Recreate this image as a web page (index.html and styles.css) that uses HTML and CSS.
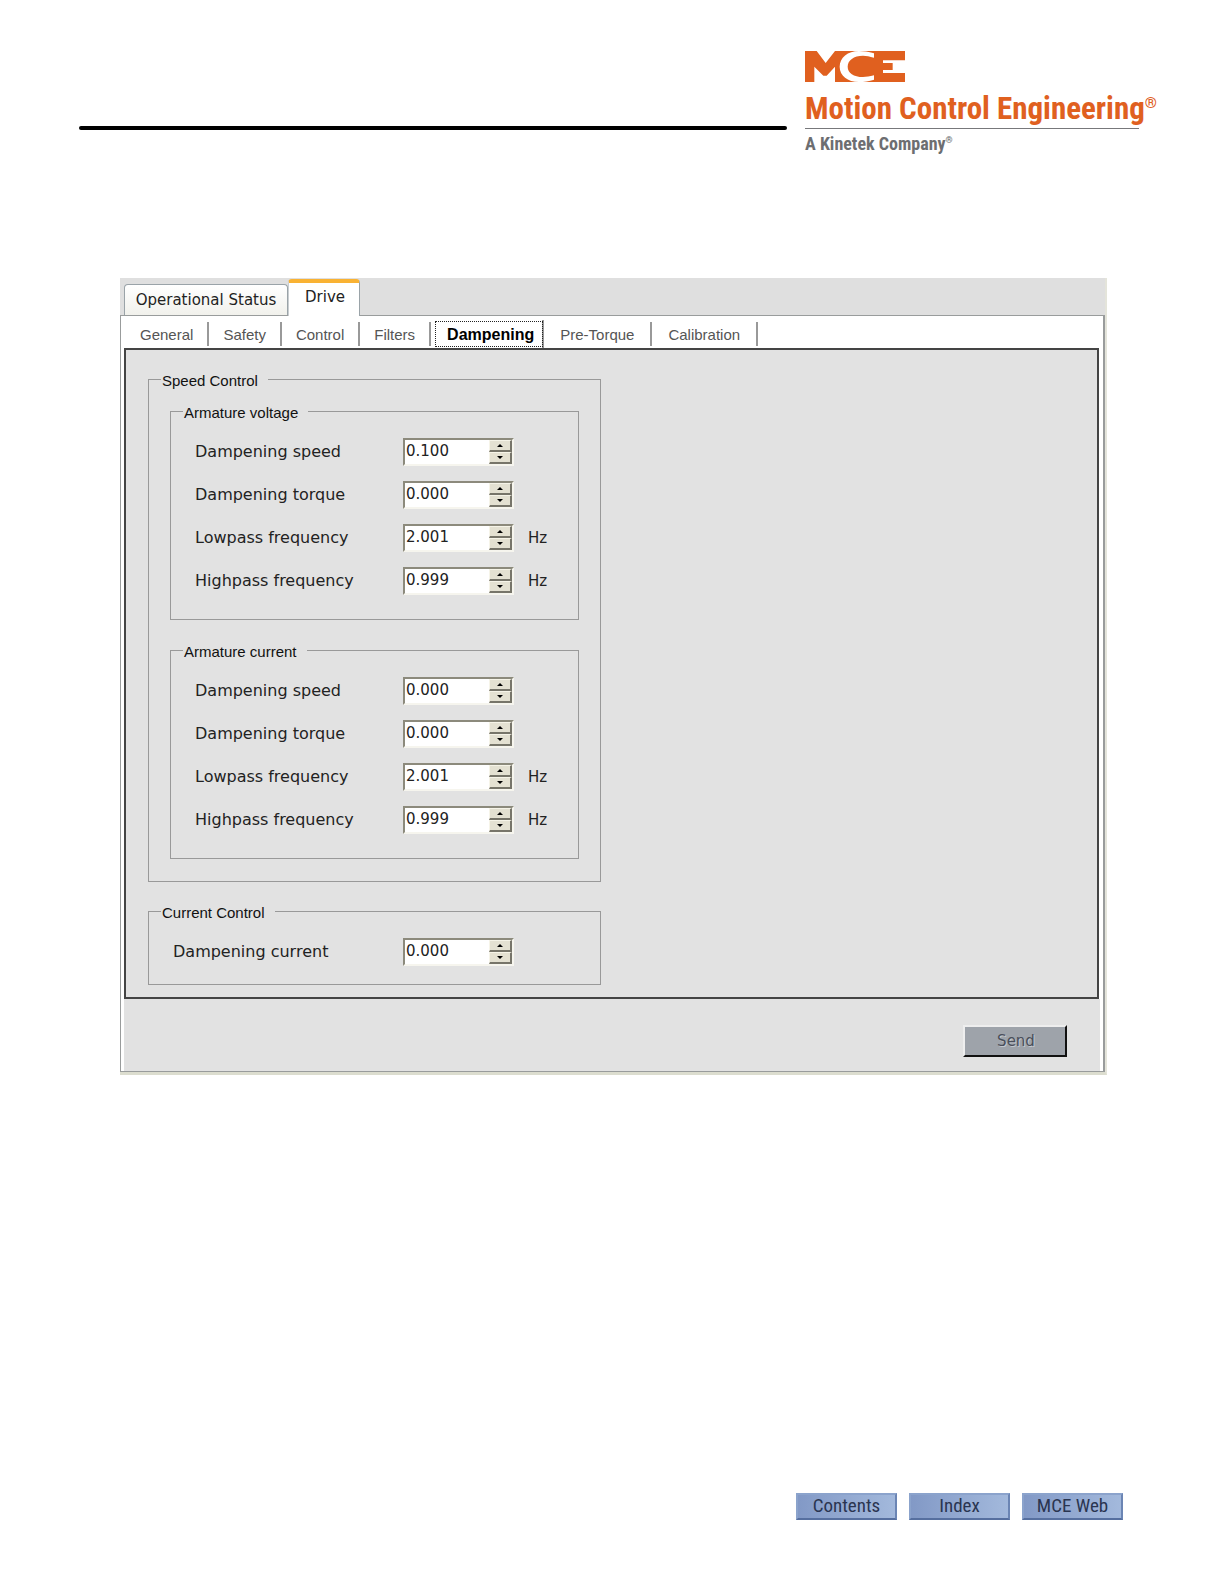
FILE: index.html
```html
<!DOCTYPE html>
<html lang="en">
<head>
<meta charset="utf-8">
<title>Motion Control Engineering - Drive Dampening</title>
<link rel="stylesheet" href="styles.css">
</head>
<body>
<header class="masthead">
  <div class="masthead-rule"></div>
  <div class="brand">
    <svg class="brand-mark" viewBox="0 0 300 93" role="img" aria-label="MCE">
      <path fill="#e0601f" d="M0 0H35L62 36L90 0H300V28H234V36H263V57H234V66H300V93H90V47L65 74H55L28 47V93H0Z"/>
      <path fill="#fff" d="M207 7C190 2 176 0 162 0C128 0 104 20 104 47C104 74 128 93 162 93C178 93 192 90 207 86V73C194 77 184 78 174 78C146 78 128 66 128 47C128 28 146 14 174 14C184 14 194 16 207 20Z"/>
    </svg>
    <div class="brand-name">Motion Control Engineering<sup>®</sup></div>
    <div class="brand-tag">A Kinetek Company<sup>®</sup></div>
  </div>
</header>

<main class="window">
  <div class="tabs" role="tablist">
    <button class="tab" role="tab" aria-selected="false">Operational Status</button>
    <button class="tab tab-active" role="tab" aria-selected="true">Drive</button>
  </div>
  <div class="window-body">
    <div class="subtabs" role="tablist">
      <button class="subtab" role="tab">General</button>
      <button class="subtab" role="tab">Safety</button>
      <button class="subtab" role="tab">Control</button>
      <button class="subtab" role="tab">Filters</button>
      <button class="subtab subtab-active" role="tab" aria-selected="true">Dampening</button>
      <button class="subtab" role="tab">Pre-Torque</button>
      <button class="subtab" role="tab">Calibration</button>
    </div>
    <form class="panel" id="dampening">
      <fieldset class="group">
        <legend>Speed Control</legend>
        <div class="group-stack">
          <fieldset class="group">
            <legend>Armature voltage</legend>
            <div class="fields">
              <div class="field"><label for="av-speed">Dampening speed</label><span class="spin"><input id="av-speed" type="text" value="0.100"><span class="spin-keys"><button type="button" class="key key-up" aria-label="Increase"></button><button type="button" class="key key-down" aria-label="Decrease"></button></span></span></div>
              <div class="field"><label for="av-torque">Dampening torque</label><span class="spin"><input id="av-torque" type="text" value="0.000"><span class="spin-keys"><button type="button" class="key key-up" aria-label="Increase"></button><button type="button" class="key key-down" aria-label="Decrease"></button></span></span></div>
              <div class="field"><label for="av-low">Lowpass frequency</label><span class="spin"><input id="av-low" type="text" value="2.001"><span class="spin-keys"><button type="button" class="key key-up" aria-label="Increase"></button><button type="button" class="key key-down" aria-label="Decrease"></button></span></span><span class="unit">Hz</span></div>
              <div class="field"><label for="av-high">Highpass frequency</label><span class="spin"><input id="av-high" type="text" value="0.999"><span class="spin-keys"><button type="button" class="key key-up" aria-label="Increase"></button><button type="button" class="key key-down" aria-label="Decrease"></button></span></span><span class="unit">Hz</span></div>
            </div>
          </fieldset>
          <fieldset class="group">
            <legend>Armature current</legend>
            <div class="fields">
              <div class="field"><label for="ac-speed">Dampening speed</label><span class="spin"><input id="ac-speed" type="text" value="0.000"><span class="spin-keys"><button type="button" class="key key-up" aria-label="Increase"></button><button type="button" class="key key-down" aria-label="Decrease"></button></span></span></div>
              <div class="field"><label for="ac-torque">Dampening torque</label><span class="spin"><input id="ac-torque" type="text" value="0.000"><span class="spin-keys"><button type="button" class="key key-up" aria-label="Increase"></button><button type="button" class="key key-down" aria-label="Decrease"></button></span></span></div>
              <div class="field"><label for="ac-low">Lowpass frequency</label><span class="spin"><input id="ac-low" type="text" value="2.001"><span class="spin-keys"><button type="button" class="key key-up" aria-label="Increase"></button><button type="button" class="key key-down" aria-label="Decrease"></button></span></span><span class="unit">Hz</span></div>
              <div class="field"><label for="ac-high">Highpass frequency</label><span class="spin"><input id="ac-high" type="text" value="0.999"><span class="spin-keys"><button type="button" class="key key-up" aria-label="Increase"></button><button type="button" class="key key-down" aria-label="Decrease"></button></span></span><span class="unit">Hz</span></div>
            </div>
          </fieldset>
        </div>
      </fieldset>
      <fieldset class="group">
        <legend>Current Control</legend>
        <div class="fields fields-wide">
          <div class="field"><label for="cc-current">Dampening current</label><span class="spin"><input id="cc-current" type="text" value="0.000"><span class="spin-keys"><button type="button" class="key key-up" aria-label="Increase"></button><button type="button" class="key key-down" aria-label="Decrease"></button></span></span></div>
        </div>
      </fieldset>
    </form>
    <div class="actions"><button class="send" type="submit" form="dampening">Send</button></div>
  </div>
</main>

<footer class="page-links">
  <a href="#contents">Contents</a>
  <a href="#index">Index</a>
  <a href="#web">MCE Web</a>
</footer>
</body>
</html>
```
FILE: styles.css
```css
* { box-sizing: border-box; }

body {
  margin: 0;
  min-height: 100vh;
  display: flex;
  flex-direction: column;
  background: #fff;
  color: #222;
  font-family: "DejaVu Sans", Verdana, sans-serif;
  font-size: 15px;
  line-height: 20px;
}

button, input { font: inherit; color: inherit; margin: 0; }

/* Masthead */
.masthead {
  display: flex;
  align-items: flex-start;
  gap: 18px;
  padding: 51px 73px 0 79px;
}
.masthead-rule {
  flex: 1;
  height: 4px;
  margin-top: 75px;
  border-radius: 2px;
  background: #000;
}
.brand {
  width: 346px;
  font-family: "Roboto Condensed", "Liberation Sans", Arial, sans-serif;
  font-weight: 700;
  white-space: nowrap;
}
.brand-mark { display: block; width: 100px; height: 31px; }
.brand-name {
  width: 334px;
  height: 47px;
  padding-top: 6px;
  border-bottom: 1px solid #77787b;
  color: #e0601f;
  font-size: 31px;
  line-height: 42px;
}
.brand-tag { padding-top: 3px; color: #6d6e71; font-size: 18px; line-height: 24px; }
.brand sup { font-size: 50%; line-height: 0; }

/* Application window */
.window {
  margin: 122px 117px 0 120px;
  border-right: 2px solid #e4e4da;
  border-bottom: 3px solid #dcddcf;
  background: #dfdfdf;
}
.tabs {
  display: flex;
  align-items: flex-end;
  height: 37px;
  padding-left: 4px;
}
.tab {
  width: 164px;
  height: 31px;
  padding: 0;
  border: 1px solid #9aa3a8;
  border-bottom: 0;
  border-radius: 4px 4px 0 0;
  background: linear-gradient(#fff, #f1f1ec);
  white-space: nowrap;
}
.tab-active {
  width: 72px;
  height: 37px;
  margin-bottom: -1px;
  padding: 0 0 5px 2px;
  border-top: 4px solid #f9b233;
  border-left-color: #c8cdd0;
  background: #fff;
}
.window-body {
  border: 1px solid #999c9c;
  border-right-width: 2px;
  padding: 0 3px;
  background: #fff;
}
.subtabs {
  display: flex;
  align-items: center;
  height: 32px;
  padding: 4px 0 0 2px;
  font-family: "Liberation Sans", Arial, sans-serif;
}
.subtab {
  height: 24px;
  padding: 2px 14px 0;
  border: 0;
  border-right: 2px solid #999;
  background: none;
  color: #555;
}
.subtab-active {
  height: 28px;
  margin-left: 3px;
  padding: 2px 8px 0 13px;
  color: #000;
  font-size: 16px;
  font-weight: 700;
  outline: 1px dotted #222;
  outline-offset: -2px;
}
.subtab-active ~ .subtab { padding: 2px 16px 0; }
.panel {
  display: flex;
  flex-direction: column;
  gap: 18px;
  margin-right: 1px;
  padding: 18px 22px 12px;
  border: 2px solid #444;
  background: #e2e2e2;
}

/* Group boxes */
.group {
  width: 100%;
  max-width: 453px;
  min-width: 0;
  margin: 0;
  padding: 0;
  border: 1px solid #999;
}
.group legend {
  margin-left: 12px;
  padding: 4px 10px 0 1px;
  color: #111;
  font-family: "Liberation Sans", Arial, sans-serif;
  line-height: 18px;
}
.group-stack { display: flex; flex-direction: column; gap: 19px; padding: 10px 21px 22px; }
.fields { display: flex; flex-direction: column; gap: 15px; padding: 16px 0 24px 24px; }
.field { display: flex; align-items: center; }
.field label { width: 208px; font-size: 16px; }
.fields-wide { padding-bottom: 18px; }
.fields-wide label { width: 230px; }
.unit { margin-left: 14px; }

.spin {
  display: flex;
  width: 111px;
  height: 28px;
  border: 2px solid;
  border-color: #8c8a7c #f6f5ee #f6f5ee #8c8a7c;
  background: #fff;
}
.spin input {
  flex: 1;
  min-width: 0;
  padding: 0 0 2px 1px;
  border: 0;
  outline: 0;
  background: none;
}
.spin-keys { display: flex; flex-direction: column; width: 23px; height: 24px; }
.key {
  flex: 1;
  display: flex;
  align-items: center;
  justify-content: center;
  padding: 0;
  border: 1px solid;
  border-color: #f6f4e8 #77756a #77756a #f6f4e8;
  border-right-width: 2px;
  border-bottom-width: 2px;
  background: #e4e1d2;
}
.key::before { content: ""; border: 3px solid transparent; }
.key-up::before { border-top-width: 0; border-bottom-color: #000; }
.key-down::before { border-bottom-width: 0; border-top-color: #000; }

.actions {
  display: flex;
  justify-content: flex-end;
  padding: 26px 33px 14px 0;
  background: #e2e2e2;
}
.send {
  width: 104px;
  height: 32px;
  padding: 0 0 0 2px;
  border: 2px solid;
  border-color: #eee #111 #111 #eee;
  background: #9ea3aa;
  color: #4a4f5a;
  text-shadow: 1px 1px 0 #c4c8ce;
}

/* Page links */
.page-links {
  display: flex;
  justify-content: flex-end;
  gap: 12px;
  margin-top: auto;
  padding: 0 101px 64px 0;
}
.page-links a {
  width: 101px;
  height: 27px;
  border: 2px solid;
  border-color: #8ba3cc #6b85b4 #566f9f #8ba3cc;
  background: linear-gradient(90deg, #8299c6, #a3b9dc);
  color: #2a3550;
  font-family: "Roboto Condensed", "Liberation Sans", Arial, sans-serif;
  font-size: 19px;
  line-height: 22px;
  text-align: center;
  text-decoration: none;
}
```
